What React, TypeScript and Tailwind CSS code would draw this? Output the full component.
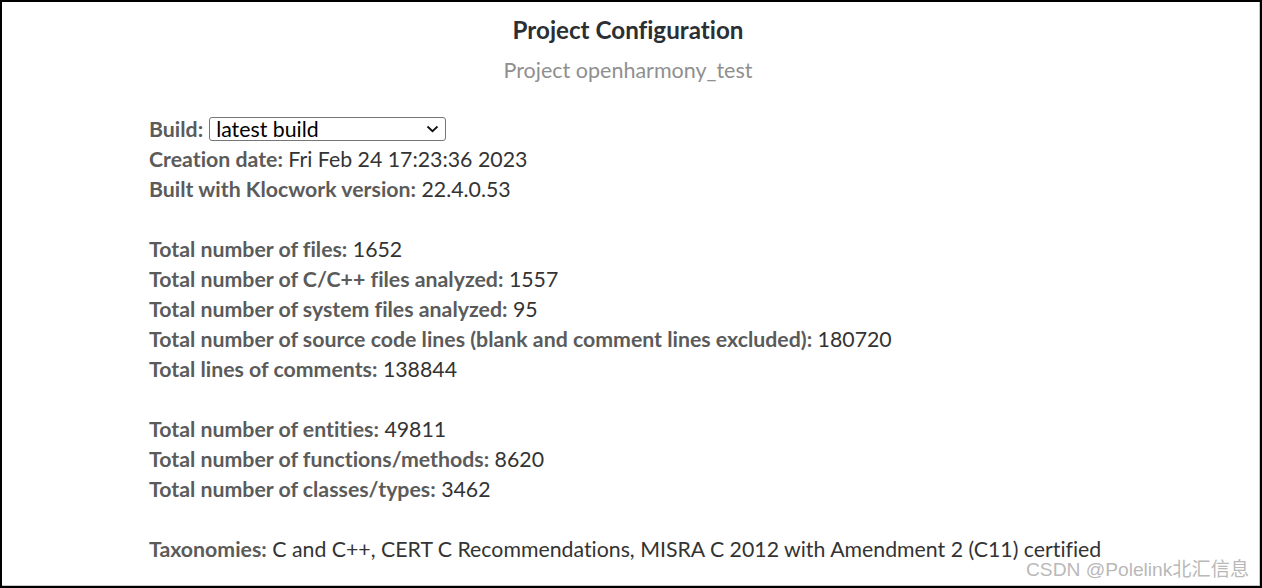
export default function App() {
  const groups: [string, string][][] = [
    [
      ["Total number of files:", "1652"],
      ["Total number of C/C++ files analyzed:", "1557"],
      ["Total number of system files analyzed:", "95"],
      ["Total number of source code lines (blank and comment lines excluded):", "180720"],
      ["Total lines of comments:", "138844"],
    ],
    [
      ["Total number of entities:", "49811"],
      ["Total number of functions/methods:", "8620"],
      ["Total number of classes/types:", "3462"],
    ],
    [
      [
        "Taxonomies:",
        "C and C++, CERT C Recommendations, MISRA C 2012 with Amendment 2 (C11) certified",
      ],
    ],
  ];

  return (
    <div
      className="relative w-[1262px] h-[588px] bg-white border-2 border-black overflow-hidden [font-variant-ligatures:none]"
      style={{ fontFamily: "Lato, 'Open Sans', sans-serif" }}
    >
      <div className="h-[584px] w-[1258px] border-r border-b border-[#c8c8c8]">
        {/* header */}
        <div className="pt-[12px] pr-[5px] text-center">
          <h1 className="text-[24.2px] leading-[32px] font-bold text-[#2b2f33]">
            Project Configuration
          </h1>
          <p className="mt-[11px] text-[21.5px] leading-[26px] text-[#8f8f8f]">
            Project openharmony_test
          </p>
        </div>

        {/* details */}
        <div className="pl-[147px] pt-[31px] text-[21.3px] leading-[30px] text-[#333]">
          <div className="flex items-center h-[30px]">
            <span className="font-bold text-[#5b5b5b]">Build:</span>
            <div className="ml-[6px] flex items-center justify-between w-[237px] h-[24px] border border-[#767676] rounded-[3px] pl-[6px] pr-[6px]">
              <span className="leading-[22px] text-black">latest build</span>
              <svg width="13" height="8" viewBox="0 0 13 8" fill="none">
                <path d="M1.5 1.5 L6.5 6.2 L11.5 1.5" stroke="#111" strokeWidth="1.8" />
              </svg>
            </div>
          </div>
          <div>
            <span className="font-bold text-[#5b5b5b]">Creation date:</span> Fri Feb 24 17:23:36 2023
          </div>
          <div>
            <span className="font-bold text-[#5b5b5b]">Built with Klocwork version:</span> 22.4.0.53
          </div>

          {groups.map((g, i) => (
            <div key={i} className="mt-[30px]">
              {g.map(([label, value], j) => (
                <div key={j}>
                  <span className="font-bold text-[#5b5b5b]">{label}</span> {value}
                </div>
              ))}
            </div>
          ))}
        </div>
      </div>

      {/* watermark */}
      <div
        className="absolute left-[1024px] top-[556px] text-[19.2px] leading-[24px] text-[#b9b9b9]"
        style={{ fontFamily: "'Liberation Sans', 'Noto Sans CJK SC', sans-serif" }}
      >
        CSDN @Polelink北汇信息
      </div>
    </div>
  );
}
